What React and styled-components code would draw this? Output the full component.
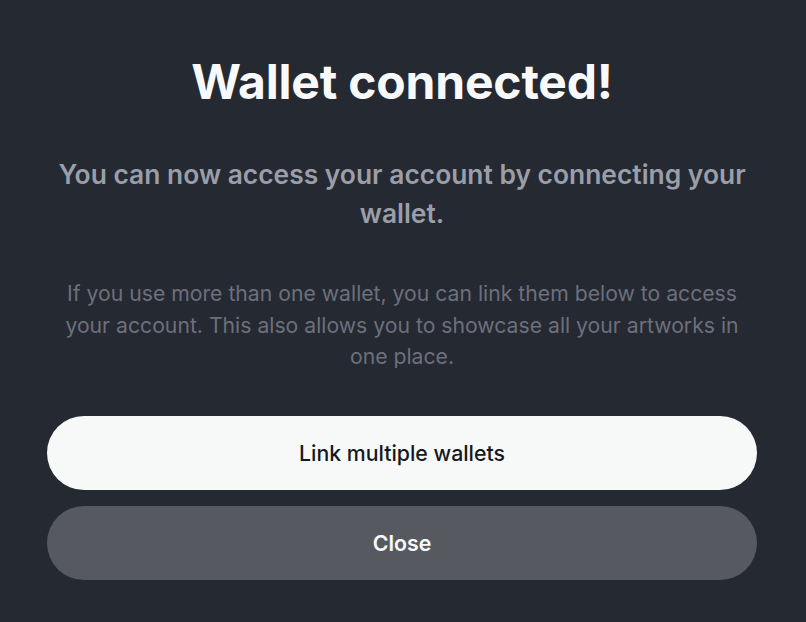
import React from "react"
import styled, { createGlobalStyle } from "styled-components"

const GlobalStyle = createGlobalStyle`
  html, body {
    margin: 0;
    padding: 0;
    background: #252932;
    font-family: Inter, "Noto Sans", sans-serif;
  }
`

const Modal = styled.div`
  box-sizing: border-box;
  width: 806px;
  height: 622px;
  padding: 55px 49px 0 47px;
  display: flex;
  flex-direction: column;
  align-items: center;
  background: #252932;
`

const Title = styled.h1`
  margin: 0;
  font-size: 48px;
  line-height: 53px;
  font-weight: 700;
  color: #f8f9fa;
  letter-spacing: -0.2px;
`

const Lead = styled.p`
  margin: 47px 0 0;
  max-width: 710px;
  font-size: 26.4px;
  line-height: 39px;
  font-weight: 600;
  color: #9a9ea9;
  text-align: center;
`

const Note = styled.p`
  margin: 45px 0 0;
  max-width: 690px;
  font-size: 21.2px;
  line-height: 31.5px;
  font-weight: 400;
  color: #6c707b;
  text-align: center;
`

const Actions = styled.div`
  margin-top: 43px;
  width: 100%;
  display: flex;
  flex-direction: column;
  gap: 16px;
`

const Button = styled.button`
  all: unset;
  box-sizing: border-box;
  width: 100%;
  height: 74px;
  border-radius: 37px;
  display: flex;
  align-items: center;
  justify-content: center;
  font-family: Inter, "Noto Sans", sans-serif;
  font-size: 21.3px;
  font-weight: ${p => (p.$primary ? 500 : 600)};
  background: ${p => (p.$primary ? "#f7f9f9" : "#565a60")};
  color: ${p => (p.$primary ? "#16181d" : "#f8f9fa")};
  cursor: pointer;
`

export default function App() {
  return (
    <>
      <GlobalStyle />
      <Modal>
        <Title>Wallet connected!</Title>
        <Lead>You can now access your account by connecting your wallet.</Lead>
        <Note>
          If you use more than one wallet, you can link them below to access
          your account. This also allows you to showcase all your artworks in
          one place.
        </Note>
        <Actions>
          <Button $primary>Link multiple wallets</Button>
          <Button>Close</Button>
        </Actions>
      </Modal>
    </>
  )
}
